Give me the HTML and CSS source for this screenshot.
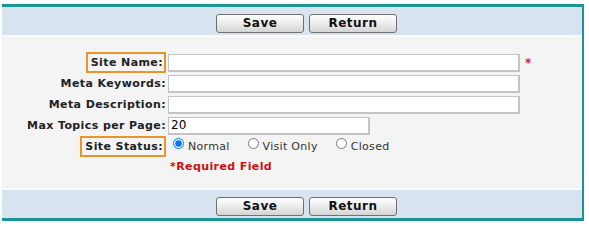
FILE: index.html
```html
<!DOCTYPE html>
<html lang="en">
<head>
  <meta charset="UTF-8">
  <title>Site Settings</title>
  <link rel="stylesheet" href="styles.css">
</head>
<body>
  <div class="panel">
    <!-- top buttons -->
    <div class="bar">
      <button class="btn">Save</button>
      <button class="btn">Return</button>
    </div>

    <div class="form">
      <div class="label"><span class="mark">Site Name:</span></div>
      <div class="field"><input type="text" class="wide"><span class="star">*</span></div>

      <div class="label">Meta Keywords:</div>
      <div class="field"><input type="text" class="wide"></div>

      <div class="label">Meta Description:</div>
      <div class="field"><input type="text" class="wide"></div>

      <div class="label">Max Topics per Page:</div>
      <div class="field"><input type="text" class="short" value="20"></div>

      <div class="label"><span class="mark">Site Status:</span></div>
      <div class="field radios">
        <label><input type="radio" name="status" checked> Normal</label>
        <label><input type="radio" name="status"> Visit Only</label>
        <label><input type="radio" name="status"> Closed</label>
      </div>

      <div class="label"></div>
      <div class="field required">*Required Field</div>
    </div>

    <!-- bottom buttons -->
    <div class="bar">
      <button class="btn">Save</button>
      <button class="btn">Return</button>
    </div>
  </div>
</body>
</html>
```

FILE: styles.css
```css
body {
  margin: 0;
  padding: 4px 0 0 2px;
  background: #ffffff;
  font-family: "DejaVu Sans", Verdana, sans-serif;
  font-size: 11px;
}

.panel {
  width: 580px;
  border-top: 3px solid #1a9494;
  border-bottom: 3px solid #1a9494;
  border-right: 2px solid #1a9494;
  background: #fafafa;
  display: flex;
  flex-direction: column;
  gap: 2px;
}

.bar {
  height: 28px;
  background: #d7e3ef;
  display: flex;
  justify-content: center;
  align-items: center;
  gap: 5px;
  padding-left: 29px;
}

.btn {
  width: 88px;
  height: 19px;
  margin-top: 4px;
  padding: 0;
  border: 1px solid #707070;
  border-radius: 3px;
  background: linear-gradient(#ffffff, #f0f0f0 40%, #d4d4d4);
  font-family: "DejaVu Sans", Verdana, sans-serif;
  font-size: 12px;
  font-weight: bold;
  letter-spacing: 0.5px;
  color: #111;
}

.form {
  background: #f4f4f4;
  height: 136px;
  padding-top: 15px;
  display: grid;
  grid-template-columns: 164px 1fr;
  grid-auto-rows: 21px;
  column-gap: 2px;
  align-items: center;
}

.label {
  text-align: right;
  font-weight: bold;
  color: #222;
  letter-spacing: 0.4px;
}

.mark {
  border: 2px solid #e8952b;
  padding: 2px 1px 2px 3px;
}

.field {
  display: flex;
  align-items: center;
}

input[type="text"] {
  height: 18px;
  box-sizing: border-box;
  border: 2px solid #cdcdcd;
  border-width: 1px 2px 2px 1px;
  border-color: #c4c4c4;
  background: #fff;
  padding: 0 2px;
  font-family: "DejaVu Sans", Verdana, sans-serif;
  font-size: 12px;
  color: #000;
}

.wide {
  width: 352px;
}

.short {
  width: 202px;
}

.star {
  color: #d41a3a;
  font-weight: bold;
  margin-left: 5px;
  font-size: 12px;
}

.radios {
  padding-left: 5px;
  gap: 18px;
  color: #333;
  letter-spacing: 0.3px;
}

.radios label {
  display: flex;
  align-items: center;
}

.radios input {
  width: 11px;
  height: 11px;
  margin: -6px 4px 0 0;
}

.required {
  color: #cc1111;
  font-weight: bold;
  font-size: 11px;
  letter-spacing: 0.4px;
  align-self: start;
  padding: 3px 0 0 2px;
}
```
